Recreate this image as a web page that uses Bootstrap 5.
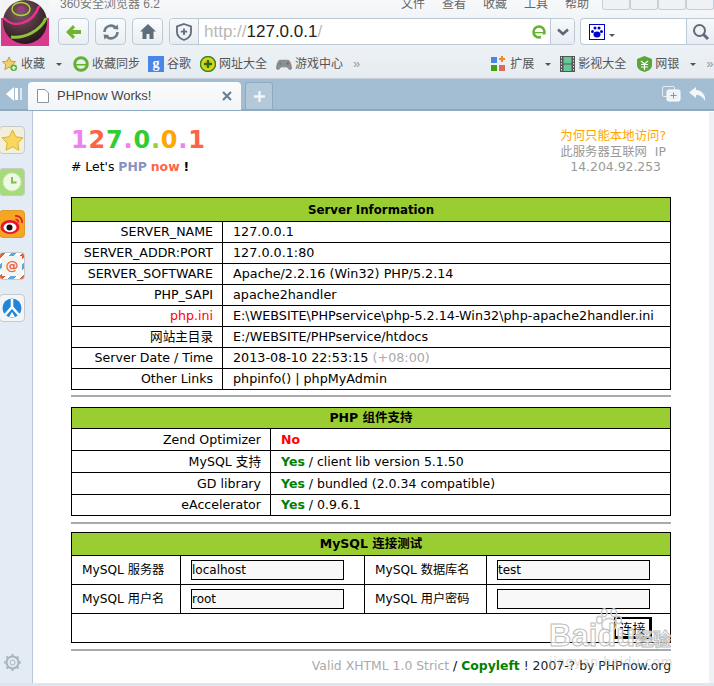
<!DOCTYPE html>
<html lang="zh-CN">
<head>
  <meta charset="UTF-8" />
  <title>PHPnow Works!</title>
  <link href="https://cdn.jsdelivr.net/npm/bootstrap@5.3.2/dist/css/bootstrap.min.css" rel="stylesheet">
  <style>
    html, body { height: 686px; overflow: hidden; }
    body { font-family: "DejaVu Sans", "Noto Sans CJK SC", sans-serif; font-size: 13px; color: #000; background: #fff; position: relative; }
    .ui-font { font-family: "Liberation Sans", "Noto Sans CJK SC", sans-serif; }

    /* browser chrome */
    .chrome-top { background: linear-gradient(#f6f8fa, #e6ecf1); height: 79px; border-bottom: 1px solid #c3ced8; overflow: hidden; }
    .title-row { height: 16px; padding-left: 60px; color: #777; font-size: 12px; line-height: 8px; overflow: hidden; }
    .menu-items { gap: 17px; margin-right: 13px; color: #666; }
    .win-btn { width: 28px; height: 10px; border: 1px solid #c6d0d9; border-top: 0; background: #eef2f5; border-radius: 0 0 3px 3px; }
    .tool-row { height: 31px; padding-left: 58px; padding-top: 2px; gap: 6px; }
    .tool-btn { width: 31px; height: 27px; background: linear-gradient(#fafcfd, #e9eef3); border: 1px solid #bccad6; border-radius: 4px; }
    .addr-box { width: 406px; height: 27px; background: #fff; border: 1px solid #bccad6; border-radius: 4px; font-size: 17px; line-height: 25px; overflow: hidden; }
    .addr-shield { width: 29px; background: linear-gradient(#f7f9fb, #e8edf2); border-right: 1px solid #bccad6; }
    .addr-url { color: #b8b8b8; padding-left: 5px; }
    .addr-url b { color: #222; font-weight: 400; }
    .addr-drop { width: 24px; background: linear-gradient(#f7f9fb, #e8edf2); border-left: 1px solid #bccad6; }
    .search-box { width: 134px; height: 27px; margin-left: -1px; background: #fff; border: 1px solid #bccad6; border-radius: 4px 0 0 4px; border-right: 0; }
    .search-btn { width: 28px; background: linear-gradient(#f7f9fb, #e8edf2); border-left: 1px solid #bccad6; }
    .fav-row { height: 31px; padding: 3px 0 0 2px; font-size: 12px; color: #555; white-space: nowrap; }
    .fav-item { gap: 3px; flex: none; }
    .drop-tri { width: 0; height: 0; border-left: 3px solid transparent; border-right: 3px solid transparent; border-top: 3px solid #555; }
    .more-mark { color: #999; font-size: 13px; }
    .sp-8 { margin-left: 8px; } .sp-9 { margin-left: 9px; } .sp-10 { margin-left: 10px; } .sp-11 { margin-left: 11px; } .sp-131 { margin-left: 131px; }
    .g-tile { width: 16px; height: 16px; background: #4a86e8; color: #fff; font: 700 14px "Liberation Serif", serif; }

    .tab-row { height: 32px; background: #a3bdd2; border-bottom: 2px solid #8fa9bf; }
    .tab-back { width: 28px; }
    .tab-page { width: 213px; height: 28px; margin-top: 3px; background: linear-gradient(#fafbfc, #f2f5f8); border-radius: 4px 4px 0 0; font-size: 13px; color: #444; padding: 0 9px; }
    .tab-new { width: 28px; height: 27px; margin: 3px 0 0 4px; background: #b3c9da; border: 1px solid #8fa9bf; border-bottom: 0; border-radius: 3px 3px 0 0; }

    /* side panel + page */
    .page-wrap { height: 575px; }
    .side-panel { width: 33px; background: #e3ebf4; border-right: 1px solid #b7c8d8; padding-top: 15px; gap: 14px; }
    .side-icon { width: 26px; height: 28px; margin-left: -1px; border-radius: 4px; border: 1px solid #c9c9c9; }
    .si-star { background: #f2efdc; }
    .si-clock { background: #a6db7c; }
    .si-weibo { background: #f5a623; border-color: #e09a2b; }
    .si-mail { background: repeating-linear-gradient(135deg, #e65a2e 0 4px, #fff 4px 8px, #5aa9dc 8px 12px, #fff 12px 16px); }
    .si-mail span { width: 20px; height: 20px; background: #f4f4f4; color: #e8663c; font-weight: 700; font-size: 13px; }
    .si-peace { background: #f3f5f7; }
    .gear-spot { margin-top: auto; margin-bottom: 14px; margin-left: 3px; }
    .page-main { width: 638px; padding-left: 38px; }
    .page-head { width: 595px; height: 86px; }
    .logo-big { font-size: 24px; font-weight: 700; line-height: 30px; height: 30px; margin-top: 14px; letter-spacing: 0.8px; }
    .tag-line { font-size: 12.4px; line-height: 16px; margin-top: 4px; }
    .head-note { font-size: 12.4px; line-height: 15.5px; text-align: right; margin-top: 17px; color: #999; }
    .ip-text { padding-right: 5px; }
    .info-tbl { width: 600px; margin: 0; border-collapse: collapse; table-layout: fixed; }
    .info-tbl > tbody > tr > th, .info-tbl > tbody > tr > td { border: 1px solid #000; padding: 0; background: #fff; color: #000; font-size: 12.75px; line-height: 20px; vertical-align: middle; }
    .info-tbl > tbody > tr > th.head-cell { background: #9acd32; text-align: center; font-weight: 700; font-size: 12.5px; }
    .info-tbl > tbody > tr > th.head-sm { font-size: 11.8px; }
    .info-tbl td.lbl { text-align: right; padding-right: 9px; font-size: 12.6px; }
    .info-tbl td.val { padding-left: 10px; white-space: nowrap; }
    .info-tbl > tbody > tr > td.red-lbl { color: #f00; }
    .mid-tbl > tbody > tr > td { font-size: 12.5px; }
    .h-20 > * { height: 20px; } .h-21 > * { height: 21px; } .h-22 > * { height: 22px; } .h-23 > * { height: 23px; } .h-24 > * { height: 24px; } .h-29 > * { height: 29px; }
    .w-151 { width: 151px; } .w-199 { width: 199px; } .w-109 { width: 109px; } .w-184 { width: 184px; } .w-122 { width: 122px; }
    .info-tbl > tbody > tr > td.form-lbl { padding-left: 10px; font-size: 12.2px; }
    .info-tbl td.form-val { padding-left: 10px; }
    .fake-input { display: block; width: 153px; height: 20px; background: #f8f8f8; border: 1px solid #000; padding: 0; font-size: 12px; line-height: 18px; color: #000; font-family: "DejaVu Sans", sans-serif; border-radius: 0; outline: 0; }
    .go-btn { display: block; margin: 0 18px 0 auto; width: 38px; height: 22px; border: 2px solid #000; border-right-width: 3px; border-bottom-width: 3px; background: #fff; font-size: 13px; line-height: 16px; padding: 0; color: #000; border-radius: 0; font-family: "Noto Sans CJK SC", sans-serif; }
    .sep-line { width: 600px; height: 2px; background: #aaa; margin: 6px 0 8px; }
    .sep-first { margin: 5px 0 10px; }
    .foot-line { width: 600px; margin-top: 8px; text-align: right; color: #aaa; font-size: 12.4px; line-height: 14px; }
    .foot-dark { color: #222; }
    .c-slash { color: #000; }
    .c-muted { color: #aaa; }
    .c-pink { color: #ee82ee; } .c-red { color: #ff6347; } .c-green { color: #32cd32; } .c-lime { color: #9acd32; } .c-orange { color: #ffa500; }
    .c-php { color: #8892bf; } .c-yes { color: #008000; } .c-no { color: #f00; }
    .bottom-strip { position: absolute; left: 0; right: 0; bottom: 0; height: 3px; background: #dfe7ee; }
    .right-edge { position: absolute; top: 112px; right: 0; width: 5px; height: 571px; background: #eef2f6; }

    /* baidu watermark over the bottom right corner */
    .wm-box { position: absolute; left: 549px; top: 608px; width: 125px; height: 64px; pointer-events: none; }
    .wm-paw { position: absolute; left: 46px; top: 0; }
    .wm-word { position: absolute; left: 0; top: 12px; white-space: nowrap; color: rgba(255,255,255,.8); -webkit-text-stroke: 1px #bdbdbd; font-family: "Liberation Sans", "Noto Sans CJK SC", sans-serif; font-weight: 700; font-size: 31px; line-height: 32px; }
    .wm-word small { font-size: 18px; font-weight: 700; }
    .wm-url { position: absolute; left: 0; top: 47px; font-size: 12px; line-height: 14px; letter-spacing: .8px; color: rgba(190,190,190,.6); }
    .logo-mark { position: absolute; left: 1px; top: 0; }
  </style>
</head>
<body>
  <div class="chrome-top ui-font">
    <div class="title-row d-flex justify-content-between">
      <span>360安全浏览器 6.2</span>
      <div class="d-flex align-items-start">
        <div class="menu-items d-flex"><span>文件</span><span>查看</span><span>收藏</span><span>工具</span><span>帮助</span></div>
        <span class="win-btn"></span><span class="win-btn"></span><span class="win-btn"></span><span class="win-btn"></span>
      </div>
    </div>
    <div class="tool-row d-flex align-items-start">
      <div class="tool-btn d-flex align-items-center justify-content-center">
        <svg width="16" height="14" viewBox="0 0 16 14"><path d="M7 0 L0 7 L7 14 L9 11.500 L6.500 9 H15 V5 H6.500 L9 2.500 Z" fill="#6fb52c"/></svg>
      </div>
      <div class="tool-btn d-flex align-items-center justify-content-center">
        <svg width="18" height="18" viewBox="0 0 18 18" fill="none" stroke="#6d7a87" stroke-width="2.600"><path d="M2.500 9 A6.500 6.500 0 0 1 13.500 4.500"/><path d="M15.500 9 A6.500 6.500 0 0 1 4.500 13.500"/><path d="M11 6 L16.500 6.500 L15.500 1.500 Z" fill="#6d7a87" stroke="none"/><path d="M7 12 L1.500 11.500 L2.500 16.500 Z" fill="#6d7a87" stroke="none"/></svg>
      </div>
      <div class="tool-btn d-flex align-items-center justify-content-center">
        <svg width="16" height="15" viewBox="0 0 16 15"><path d="M8 0 L0 7.500 H2.500 V15 H6.500 V10 H9.500 V15 H13.500 V7.500 H16 Z" fill="#5f6d7b"/></svg>
      </div>
      <div class="addr-box d-flex">
        <div class="addr-shield d-flex align-items-center justify-content-center">
          <svg width="16" height="18" viewBox="0 0 16 18" fill="none" stroke="#5e6c7b" stroke-width="1.800"><path d="M8 1 L15 3.500 V9 C15 13 11.500 15.800 8 17 C4.500 15.800 1 13 1 9 V3.500 Z"/><path d="M8 5.500 V12 M4.800 8.700 H11.200"/></svg>
        </div>
        <div class="addr-url flex-grow-1">http://<b>127.0.0.1</b>/</div>
        <div class="d-flex align-items-center me-1">
          <svg width="14" height="14" viewBox="0 0 14 14"><circle cx="7" cy="7" r="5.500" fill="none" stroke="#62b22f" stroke-width="2.600"/><path d="M2.500 7 H12 V8.300 H2.500 Z" fill="#62b22f"/><path d="M9 9.500 H13.500 V13 H9 Z" fill="#fff"/></svg>
        </div>
        <div class="addr-drop d-flex align-items-center justify-content-center">
          <svg width="12" height="8" viewBox="0 0 12 8" fill="none" stroke="#5b6977" stroke-width="2.600"><path d="M1 1.500 L6 6 L11 1.500"/></svg>
        </div>
      </div>
      <div class="search-box d-flex">
        <div class="flex-grow-1 d-flex align-items-center ps-2 gap-1">
          <svg width="16" height="16" viewBox="0 0 16 16"><rect x=".5" y=".5" width="15" height="15" fill="#fff" stroke="#00c"/><ellipse cx="8" cy="10.500" rx="3.500" ry="3" fill="#00c"/><circle cx="3.500" cy="7.500" r="1.500" fill="#00c"/><circle cx="12.500" cy="7.500" r="1.500" fill="#00c"/><circle cx="6" cy="4" r="1.500" fill="#00c"/><circle cx="10" cy="4" r="1.500" fill="#00c"/></svg>
          <span class="drop-tri mt-2"></span>
        </div>
        <div class="search-btn d-flex align-items-center justify-content-center">
          <svg width="18" height="18" viewBox="0 0 18 18" fill="none" stroke="#5e6c7b"><circle cx="7.500" cy="7.500" r="5.500" stroke-width="2"/><path d="M11.500 11.500 L16 16" stroke-width="3"/></svg>
        </div>
      </div>
    </div>
    <div class="fav-row d-flex align-items-center">
      <div class="fav-item d-flex align-items-center">
        <svg width="16" height="16" viewBox="0 0 17 17"><path d="M7.500 1 L9.500 5.500 L14.500 6 L11 9.500 L12 14.500 L7.500 12 L3 14.500 L4 9.500 L.5 6 L5.500 5.500 Z" fill="#f2cf6b" stroke="#c39a3e"/><circle cx="12.500" cy="12.500" r="3.500" fill="#59b03a"/><path d="M12.500 10.500 V14.500 M10.500 12.500 H14.500" stroke="#fff" stroke-width="1.300"/></svg>
        <span>收藏</span><span class="drop-tri ms-2"></span>
      </div>
      <div class="fav-item d-flex align-items-center sp-11">
        <svg width="16" height="16" viewBox="0 0 14 14"><circle cx="7" cy="7" r="5.500" fill="none" stroke="#62b22f" stroke-width="2.600"/><path d="M2.500 7 H12 V8.300 H2.500 Z" fill="#62b22f"/></svg>
        <span>收藏同步</span>
      </div>
      <div class="fav-item d-flex align-items-center sp-8">
        <span class="g-tile d-flex align-items-center justify-content-center">g</span>
        <span>谷歌</span>
      </div>
      <div class="fav-item d-flex align-items-center sp-9">
        <svg width="16" height="16" viewBox="0 0 16 16"><circle cx="8" cy="8" r="7.500" fill="#e3cf1c" stroke="#2d8b1f" stroke-width="1.400"/><path d="M8 4 V12 M4 8 H12" stroke="#1f6f14" stroke-width="2.400"/></svg>
        <span>网址大全</span>
      </div>
      <div class="fav-item d-flex align-items-center sp-9">
        <svg width="16" height="13" viewBox="0 0 17 13"><path d="M4 2 H13 C15 2 16.500 8 16.500 11 C15 13 13 11 11.500 9 H5.500 C4 11 2 13 .5 11 C.5 8 2 2 4 2 Z" fill="#8a8f94" stroke="#666" stroke-width=".6"/><circle cx="4.500" cy="5.500" r="1.200" fill="#3a3"/><circle cx="12.500" cy="5.500" r="1.200" fill="#d33"/></svg>
        <span>游戏中心</span>
      </div>
      <span class="more-mark sp-10">»</span>
      <div class="fav-item d-flex align-items-center sp-131">
        <svg width="16" height="16" viewBox="0 0 16 16"><rect y="1" width="6" height="6" fill="#4a86e8"/><rect y="9" width="6" height="6" fill="#3fa30f"/><rect x="8" y="9" width="6" height="6" fill="#dd6b5b"/><path d="M11 0 V6 M8 3 H14" stroke="#f08a1d" stroke-width="2"/></svg>
        <span>扩展</span><span class="drop-tri ms-2"></span>
      </div>
      <div class="fav-item d-flex align-items-center sp-9">
        <svg width="15" height="16" viewBox="0 0 15 16"><rect width="15" height="16" fill="#555"/><rect x="3.500" y="1" width="8" height="6.500" fill="#66c79a"/><rect x="3.500" y="8.500" width="8" height="6.500" fill="#66c79a"/><path d="M1.500 1 V15 M13.500 1 V15" stroke="#ddd" stroke-dasharray="1.500 1.500"/></svg>
        <span>影视大全</span>
      </div>
      <div class="fav-item d-flex align-items-center sp-11">
        <svg width="15" height="16" viewBox="0 0 15 16"><path d="M7.500 0 L15 3 V9 C15 13 11 15 7.500 16 C4 15 0 13 0 9 V3 Z" fill="#5ba63a"/><path d="M4 5 L7.500 8 L11 5 M4 8.500 H11 M4 11 H11 M7.500 8 V14" stroke="#fff" stroke-width="1.200" fill="none"/></svg>
        <span>网银</span><span class="drop-tri ms-2"></span>
      </div>
      <span class="more-mark sp-10">»</span>
    </div>
  </div>

  <div class="tab-row ui-font d-flex">
    <div class="tab-back d-flex align-items-center justify-content-center">
      <svg width="16" height="14" viewBox="0 0 16 14"><path d="M8 0 L0 7 L8 14 Z" fill="#fff"/><rect x="9" y="1" width="3" height="12" fill="#fff"/><rect x="14" y="1" width="2" height="12" fill="#dfe8ef"/></svg>
    </div>
    <div class="tab-page d-flex align-items-center gap-2">
      <svg width="12" height="14" viewBox="0 0 12 14" fill="#fff" stroke="#8d9499"><path d="M.5 .5 H8 L11.500 4 V13.500 H.5 Z"/></svg>
      <span class="flex-grow-1">PHPnow Works!</span>
      <svg width="10" height="10" viewBox="0 0 10 10" stroke="#6b7f90" stroke-width="2.200"><path d="M1 1 L9 9 M9 1 L1 9"/></svg>
    </div>
    <div class="tab-new d-flex align-items-center justify-content-center">
      <svg width="11" height="11" viewBox="0 0 11 11" stroke="#f3f6f8" stroke-width="2.400"><path d="M5.500 0 V11 M0 5.500 H11"/></svg>
    </div>
    <div class="ms-auto d-flex align-items-center gap-2 pe-2">
      <svg width="19" height="16" viewBox="0 0 19 16" fill="none"><rect x=".5" y=".5" width="12" height="10" rx="1.500" stroke="#e4ecf2"/><rect x="5" y="4" width="13" height="11" rx="1.500" fill="#eef3f7" stroke="#fff"/><path d="M11.500 6.500 V12.500 M8.500 9.500 H14.500" stroke="#7f95a8"/></svg>
      <svg width="17" height="14" viewBox="0 0 17 14"><path d="M7 0 L0 5.500 L7 11 V8 C11 7.500 14 10 16 14 C17 8 13 3.500 7 3 Z" fill="#f2f6f9"/></svg>
    </div>
  </div>

  <div class="page-wrap d-flex">
    <div class="side-panel d-flex flex-column">
      <div class="side-icon si-star d-flex align-items-center justify-content-center">
        <svg width="23" height="22" viewBox="0 0 23 22"><path d="M11.500 1 L14.800 7.800 L22 8.800 L16.800 14 L18 21.300 L11.500 17.800 L5 21.300 L6.200 14 L1 8.800 L8.200 7.800 Z" fill="#f9d75b" stroke="#d9b23c"/></svg>
      </div>
      <div class="side-icon si-clock d-flex align-items-center justify-content-center">
        <svg width="20" height="20" viewBox="0 0 20 20"><circle cx="10" cy="10" r="9" fill="#eff7e5" stroke="#cfe9b7"/><path d="M10 5 V10.500 H14.500" stroke="#7fbf4e" stroke-width="2" fill="none"/></svg>
      </div>
      <div class="side-icon si-weibo d-flex align-items-center justify-content-center">
        <svg width="24" height="22" viewBox="0 0 24 22"><ellipse cx="10" cy="14" rx="9.500" ry="7" fill="#e6162d"/><ellipse cx="10" cy="14.500" rx="6.500" ry="4.700" fill="#fff"/><circle cx="9.500" cy="14.500" r="3" fill="#111"/><path d="M15 3 A6 6 0 0 1 22 10 M15.500 6.500 A3 3 0 0 1 18.500 9.500" fill="none" stroke="#e6162d" stroke-width="1.600"/></svg>
      </div>
      <div class="side-icon si-mail d-flex align-items-center justify-content-center">
        <span class="d-flex align-items-center justify-content-center">@</span>
      </div>
      <div class="side-icon si-peace d-flex align-items-center justify-content-center">
        <svg width="20" height="20" viewBox="0 0 20 20"><circle cx="10" cy="10" r="9.500" fill="#1f86db"/><path d="M10 1 V9 L3 17 M10 9 L17 17" stroke="#fff" stroke-width="2.600" fill="none"/><path d="M7 19 L10 14 L13 19 Z" fill="#fff"/></svg>
      </div>
      <div class="gear-spot">
        <svg width="19" height="19" viewBox="0 0 19 19" fill="none" stroke="#a9b4bd"><circle cx="9.500" cy="9.500" r="6" stroke-width="2"/><circle cx="9.500" cy="9.500" r="2.500"/><path d="M9.500 1 V3.500 M9.500 15.500 V18 M1 9.500 H3.500 M15.500 9.500 H18 M3.500 3.500 L5.300 5.300 M13.700 13.700 L15.500 15.500 M15.500 3.500 L13.700 5.300 M5.300 13.700 L3.500 15.500" stroke-width="2"/></svg>
      </div>
    </div>
    <div class="page-main">
      <div class="page-head d-flex justify-content-between">
        <div>
          <div class="logo-big"><span class="c-pink">1</span><span class="c-red">2</span><span class="c-green">7</span><span class="c-pink">.</span><span class="c-green">0</span><span class="c-lime">.</span><span class="c-orange">0</span><span class="c-pink">.</span><span class="c-red">1</span></div>
          <div class="tag-line"># Let's <b class="c-php">PHP</b> <b class="c-red">now</b> <b>!</b></div>
        </div>
        <div class="head-note">
          <div class="c-orange">为何只能本地访问?</div>
          <div>此服务器互联网&nbsp; IP</div>
          <div class="ip-text">14.204.92.253</div>
        </div>
      </div>

      <table class="table info-tbl">
        <colgroup><col class="w-151"><col></colgroup>
        <tbody>
          <tr class="h-24"><th colspan="2" class="head-cell head-sm">Server Information</th></tr>
          <tr class="h-21"><td class="lbl">SERVER_NAME</td><td class="val">127.0.0.1</td></tr>
          <tr class="h-21"><td class="lbl">SERVER_ADDR:PORT</td><td class="val">127.0.0.1:80</td></tr>
          <tr class="h-21"><td class="lbl">SERVER_SOFTWARE</td><td class="val">Apache/2.2.16 (Win32) PHP/5.2.14</td></tr>
          <tr class="h-21"><td class="lbl">PHP_SAPI</td><td class="val">apache2handler</td></tr>
          <tr class="h-21"><td class="lbl red-lbl">php.ini</td><td class="val">E:\WEBSITE\PHPservice\php-5.2.14-Win32\php-apache2handler.ini</td></tr>
          <tr class="h-21"><td class="lbl">网站主目录</td><td class="val">E:/WEBSITE/PHPservice/htdocs</td></tr>
          <tr class="h-21"><td class="lbl">Server Date / Time</td><td class="val">2013-08-10 22:53:15 <span class="c-muted">(+08:00)</span></td></tr>
          <tr class="h-20"><td class="lbl">Other Links</td><td class="val">phpinfo() | phpMyAdmin</td></tr>
        </tbody>
      </table>
      <div class="sep-line sep-first"></div>

      <table class="table info-tbl mid-tbl">
        <colgroup><col class="w-199"><col></colgroup>
        <tbody>
          <tr><th colspan="2" class="head-cell">PHP 组件支持</th></tr>
          <tr class="h-22"><td class="lbl">Zend Optimizer</td><td class="val"><b class="c-no">No</b></td></tr>
          <tr class="h-22"><td class="lbl">MySQL 支持</td><td class="val"><b class="c-yes">Yes</b> / client lib version 5.1.50</td></tr>
          <tr class="h-22"><td class="lbl">GD library</td><td class="val"><b class="c-yes">Yes</b> / bundled (2.0.34 compatible)</td></tr>
          <tr class="h-21"><td class="lbl">eAccelerator</td><td class="val"><b class="c-yes">Yes</b> / 0.9.6.1</td></tr>
        </tbody>
      </table>
      <div class="sep-line"></div>

      <table class="table info-tbl">
        <colgroup><col class="w-109"><col class="w-184"><col class="w-122"><col></colgroup>
        <tbody>
          <tr class="h-23"><th colspan="4" class="head-cell">MySQL 连接测试</th></tr>
          <tr class="h-29">
            <td class="form-lbl">MySQL 服务器</td><td class="form-val"><input class="fake-input" type="text" value="localhost"></td>
            <td class="form-lbl">MySQL 数据库名</td><td class="form-val"><input class="fake-input" type="text" value="test"></td>
          </tr>
          <tr class="h-29">
            <td class="form-lbl">MySQL 用户名</td><td class="form-val"><input class="fake-input" type="text" value="root"></td>
            <td class="form-lbl">MySQL 用户密码</td><td class="form-val"><input class="fake-input" type="password"></td>
          </tr>
          <tr class="h-29"><td colspan="4"><button class="go-btn" type="button">连接</button></td></tr>
        </tbody>
      </table>
      <div class="sep-line"></div>
      <div class="foot-line">Valid XHTML 1.0 Strict <span class="c-slash">/</span> <b class="c-yes">Copyleft</b> <span class="foot-dark">! 2007-? by PHPnow.org</span></div>
    </div>
  </div>
  <div class="right-edge"></div>
  <div class="bottom-strip"></div>

  <div class="wm-box">
    <svg class="wm-paw" width="28" height="24" viewBox="0 0 34 30" fill="none" stroke="#ccc" stroke-width="2"><ellipse cx="17" cy="21" rx="9" ry="8"/><ellipse cx="5" cy="15" rx="3.500" ry="4.500"/><ellipse cx="29" cy="15" rx="3.500" ry="4.500"/><ellipse cx="11" cy="6" rx="3.500" ry="5"/><ellipse cx="23" cy="6" rx="3.500" ry="5"/></svg>
    <span class="wm-word">Baidu<small>经验</small></span>
    <span class="wm-url">jingyan.baidu.com</span>
  </div>

  <!-- logo sits over the title and tool rows -->
  <svg class="logo-mark" width="48" height="46" viewBox="0 0 48 46">
    <defs>
      <radialGradient id="ballFill" cx="40%" cy="30%" r="75%"><stop offset="0" stop-color="#7b5a63"/><stop offset="1" stop-color="#231316"/></radialGradient>
    </defs>
    <rect width="48" height="46" fill="#d83a8e"/>
    <rect width="48" height="18" fill="#f2f4f6"/>
    <circle cx="24" cy="22" r="22" fill="url(#ballFill)"/>
    <path d="M3 18 C12 29 32 24 38 6" fill="none" stroke="#ec2f95" stroke-width="2.500"/>
    <path d="M10 37 C24 39 40 30 45 18" fill="none" stroke="#8fc43a" stroke-width="3"/>
    <ellipse cx="20" cy="9" rx="9" ry="6.500" fill="none" stroke="#b5cf3c" stroke-width="1.500"/>
    <ellipse cx="20" cy="9" rx="4" ry="3" fill="#a03a85"/>
  </svg>
</body>
</html>
